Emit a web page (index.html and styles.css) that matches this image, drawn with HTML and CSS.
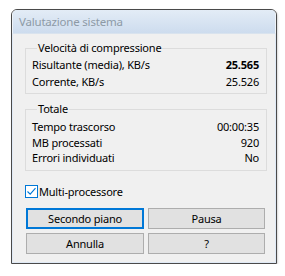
FILE: index.html
```html
<!DOCTYPE html>
<html>
<head>
<meta charset="utf-8">
<link rel="stylesheet" href="styles.css">
</head>
<body>
<div class="window">
  <div class="titlebar"><span class="title">Valutazione sistema</span></div>
  <div class="content">
    <fieldset class="group group-speed">
      <legend>Velocità di compressione</legend>
      <div class="row"><span>Risultante (media), KB/s</span><span class="val bold">25.565</span></div>
      <div class="row"><span>Corrente, KB/s</span><span class="val">25.526</span></div>
    </fieldset>
    <fieldset class="group group-total">
      <legend>Totale</legend>
      <div class="row"><span>Tempo trascorso</span><span class="val">00:00:35</span></div>
      <div class="row"><span>MB processati</span><span class="val">920</span></div>
      <div class="row"><span>Errori individuati</span><span class="val">No</span></div>
    </fieldset>
    <label class="check">
      <span class="box"><svg width="11" height="11" viewBox="0 0 11 11"><path d="M1.5 5.5 L4.2 8.2 L9.5 2.2" fill="none" stroke-width="1.1"/></svg></span>
      <span>Multi-processore</span>
    </label>
    <div class="buttons">
      <div class="btn focus">Secondo piano</div>
      <div class="btn">Pausa</div>
      <div class="btn">Annulla</div>
      <div class="btn">?</div>
    </div>
  </div>
</div>
</body>
</html>
```
FILE: styles.css
```css
* { box-sizing: border-box; }
html, body { margin: 0; padding: 0; background: #ffffff; }
body {
  font-family: "Noto Sans", "Open Sans", sans-serif;
  font-size: 11px;
  letter-spacing: -0.2px;
  color: #000;
}
.window {
  margin: 9px 0 0 11px;
  width: 266px;
  height: 255px;
  border: 1px solid #4a4a4a;
  border-radius: 6px 6px 0 0;
  background: #f0f0f0;
  box-shadow: 1px 1px 2px rgba(0,0,0,0.15);
  display: flex;
  flex-direction: column;
  overflow: hidden;
}
.titlebar {
  height: 24px;
  flex: none;
  background: linear-gradient(#e3ecf6, #cddcee);
  border-bottom: 1px solid #d9e3ee;
  border-left: 1px solid #eef3f9;
  border-right: 1px solid #eef3f9;
  padding: 4px 0 0 6px;
}
.title {
  color: #8d9aa6;
  font-size: 11.5px;
}
.content {
  flex: 1;
  padding: 6px 8px 0 12px;
  border-left: 1px solid #dfe9f5;
  border-right: 1px solid #dfe9f5;
  border-bottom: 1px solid #dfe9f5;
}
.group {
  margin: 0;
  border: 1px solid #dcdcdc;
  padding: 0 7px 0 6px;
  min-width: 0;
}
.group legend {
  padding: 0 1px;
  margin-left: 5px;
  line-height: 16px;
}
.group-speed { height: 54px; }
.group-total { height: 70px; margin-top: 7px; padding-top: 2px; }
.row {
  display: flex;
  justify-content: space-between;
  height: 17px;
  line-height: 17px;
}
.group-total .row { height: 15.5px; line-height: 15.5px; }
.bold { font-weight: bold; }
.check {
  display: flex;
  align-items: center;
  margin-top: 14px;
  height: 13px;
}
.box {
  width: 13px;
  height: 13px;
  border: 1px solid #0078d7;
  background: #fff;
  display: flex;
  align-items: center;
  justify-content: center;
  margin-right: 1px;
}
.box svg path { stroke: #0078d7; }
.buttons {
  display: grid;
  grid-template-columns: 118px 117px;
  column-gap: 4px;
  row-gap: 4px;
  margin-top: 10px;
  margin-left: 1px;
}
.btn {
  height: 21px;
  background: #e1e1e1;
  border: 1px solid #adadad;
  text-align: center;
  line-height: 19px;
}
.btn.focus {
  border: 2px solid #0078d7;
  line-height: 17px;
}
```
